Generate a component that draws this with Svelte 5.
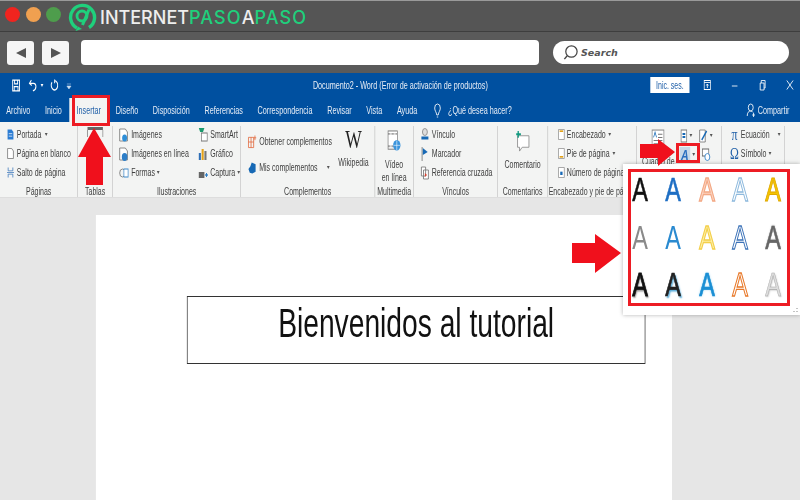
<script>
  const tabs = ['Archivo','Inicio','Insertar','Diseño','Disposición','Referencias','Correspondencia','Revisar','Vista','Ayuda'];
  const arts = ['a1','a2','a3','a4','a5','b1','b2','b3','b4','b5','c1','c2','c3','c4','c5'];
</script>

<div class="root">
  <header class="chrome-top">
    <i class="dot red"></i><i class="dot orange"></i><i class="dot green"></i>
    <svg class="logo" viewBox="0 0 30 30" width="30" height="30">
      <path d="M9 26A12 12 0 1 1 21 25.500" fill="none" stroke="#1fd07c" stroke-width="3.400"/>
      <path d="M10 24.500L7.500 29L14 27Z" fill="#1fd07c"/>
      <circle cx="14" cy="14" r="5" fill="none" stroke="#1fd07c" stroke-width="2.800"/>
      <path d="M21 7.500L14.500 23" fill="none" stroke="#1fd07c" stroke-width="3"/>
    </svg>
    <span class="brand">INTERNET<b>PASO</b>A<b>PASO</b></span>
  </header>
  <nav class="chrome-nav">
    <button class="navbtn"><svg viewBox="0 0 12 12" width="12" height="12"><path d="M11 1V11L1 6Z" fill="#555"/></svg></button>
    <button class="navbtn"><svg viewBox="0 0 12 12" width="12" height="12"><path d="M1 1V11L11 6Z" fill="#555"/></svg></button>
    <div class="address"></div>
    <div class="search">
      <svg viewBox="0 0 18 18" width="17" height="17"><circle cx="10" cy="8" r="6" fill="none" stroke="#444" stroke-width="1.3"/><path d="M5.500 12.500L2.500 16" stroke="#444" stroke-width="1.500"/></svg>
      <span>Search</span>
    </div>
  </nav>

  <div class="frame">
    <section class="titlebar">
      <div class="qat">
        <svg viewBox="0 0 12 12" width="14" height="13"><path d="M1.500 1H10.500V11H1.500Z M4 1V4.500H8V1 M3.500 11V7H8.500V11" fill="none" stroke="#fff" stroke-width="1.200"/></svg>
        <svg class="undo" viewBox="0 0 12 12" width="14" height="13"><path d="M4 1L1.500 4L4.500 6 M2 4H7Q10 4 10 7T6 11" fill="none" stroke="#fff" stroke-width="1.300"/></svg>
        <i class="caret w"></i>
        <svg class="redo" viewBox="0 0 12 12" width="14" height="13"><path d="M7 1.500A4.300 4.300 0 1 1 3.500 3M7 .5V4" fill="none" stroke="#fff" stroke-width="1.300"/></svg>
        <svg class="cust" viewBox="0 0 8 8" width="9" height="8"><path d="M1 2H7M1 4H7L4 7Z" fill="#cfe0f2" stroke="#cfe0f2" stroke-width=".6"/></svg>
      </div>
      <div class="doc">Documento2 - Word (Error de activación de productos)</div>
      <button class="signin">Inic. ses.</button>
      <div class="win">
        <svg viewBox="0 0 12 12" width="15" height="12"><rect x="1.500" y="1.500" width="9" height="9" fill="none" stroke="#fff"/><path d="M1.500 3.500H10.500M6 9V5M4.500 6.500L6 5L7.500 6.500" fill="none" stroke="#fff"/></svg>
        <svg viewBox="0 0 12 12" width="15" height="12"><path d="M2 7H10" stroke="#fff"/></svg>
        <svg viewBox="0 0 12 12" width="15" height="12"><path d="M2.500 4H8V11H2.500ZM4 4V1.500H9.500V9H8" fill="none" stroke="#fff"/></svg>
        <svg viewBox="0 0 12 12" width="15" height="12"><path d="M1.500 1.500L10.500 10.500M10.500 1.500L1.500 10.500" stroke="#fff"/></svg>
      </div>
    </section>
    <section class="tabs">
      {#each tabs as t}
        <span class="tab" class:active={t === 'Insertar'}>{t}</span>
      {/each}
      <svg class="bulb" viewBox="0 0 10 15" width="12" height="15"><path d="M5 1A4 4 0 0 1 9 5C9 8 6.500 9 6 12H4C3.500 9 1 8 1 5A4 4 0 0 1 5 1ZM4 14H6" fill="none" stroke="#fff"/></svg>
      <span class="ask">¿Qué desea hacer?</span>
      <span class="share">
        <svg viewBox="0 0 12 14" width="15" height="14"><circle cx="6" cy="4.500" r="3.500" fill="none" stroke="#fff"/><path d="M1 13Q1 8 6 8Q8 8 9.500 9.500M8 12H12M10 10V14" fill="none" stroke="#fff"/></svg>
        Compartir
      </span>
    </section>

    <section class="ribbon">
      <div class="group g1">
        <div class="col pg">
          <div class="it"><svg viewBox="0 0 12 14" width="10" height="13"><path d="M1 1H8L11 4V13H1Z" fill="#2b7cd3"/><path d="M3 6H9M3 9H9" stroke="#fff"/></svg>Portada<i class="caret"></i></div>
          <div class="it"><svg viewBox="0 0 12 14" width="10" height="13"><path d="M1 1H8L11 4V13H1Z" fill="#fff" stroke="#666"/></svg>Página en blanco</div>
          <div class="it"><svg viewBox="0 0 12 14" width="10" height="13"><path d="M2 1V5H10V1M2 13V9H10V13M0 7H12" fill="none" stroke="#2f6fb7"/></svg>Salto de página</div>
        </div>
        <div class="glabel">Páginas</div>
      </div>
      <div class="group g2">
        <div class="col center">
          <svg viewBox="0 0 24 10" width="24" height="10"><rect x="1" y="0" width="22" height="3" fill="#666"/><path d="M1 3V10M23 3V10" stroke="#888"/></svg>
        </div>
        <div class="glabel">Tablas</div>
      </div>
      <div class="group g3">
        <div class="cols2">
          <div class="col il1">
            <div class="it"><svg viewBox="0 0 14 14" width="16" height="14"><path d="M1 1H9L12 4V13H1Z" fill="#fff" stroke="#777"/><circle cx="8" cy="10" r="3.500" fill="#2f8fd8"/></svg>Imágenes</div>
            <div class="it"><svg viewBox="0 0 14 14" width="16" height="14"><path d="M1 1H9L12 4V13H1Z" fill="#fff" stroke="#777"/><circle cx="8" cy="10" r="4" fill="#2f7fc8"/></svg>Imágenes en línea</div>
            <div class="it"><svg viewBox="0 0 14 14" width="16" height="14"><circle cx="5" cy="7" r="4" fill="none" stroke="#777"/><rect x="7" y="3" width="6" height="8" fill="#fff" stroke="#3a87c9"/></svg>Formas<i class="caret"></i></div>
          </div>
          <div class="col il2">
            <div class="it"><svg viewBox="0 0 14 14" width="16" height="14"><path d="M1 0H9L7 4H3Z" fill="#1b9a6e"/><rect x="5" y="5" width="8" height="8" fill="#fff" stroke="#777"/></svg>SmartArt</div>
            <div class="it"><svg viewBox="0 0 14 14" width="16" height="14"><rect x="1" y="6" width="3" height="7" fill="#2f6fb7"/><rect x="5" y="2" width="3" height="11" fill="#e3a21a"/><rect x="9" y="4" width="3" height="9" fill="#777"/></svg>Gráfico</div>
            <div class="it"><svg viewBox="0 0 14 14" width="16" height="14"><rect x="1" y="6" width="8" height="6" fill="#666"/><path d="M10 9H14M12 7V11" stroke="#2f7fc8" stroke-width="1.500"/></svg>Captura<i class="caret"></i></div>
          </div>
        </div>
        <div class="glabel">Ilustraciones</div>
      </div>
      <div class="group g4">
        <div class="compl">
          <div class="col two">
            <div class="it"><svg viewBox="0 0 14 14" width="13" height="14"><path d="M1 2H9V13H1ZM1 7H9M5 2V13M11 0V5M9 2.500H13" fill="none" stroke="#e2673a"/></svg>Obtener complementos</div>
            <div class="it"><svg viewBox="0 0 14 14" width="13" height="14"><path d="M6 1L12 3V11L7 13L3 12L1 8L4 5Z" fill="#1769b5"/></svg>Mis complementos<i class="caret sp"></i></div>
          </div>
          <div class="wiki"><span class="w">W</span><span class="wn">Wikipedia</span></div>
        </div>
        <div class="glabel">Complementos</div>
      </div>
      <div class="group g5">
        <div class="col big">
          <svg viewBox="0 0 20 24" width="24" height="23"><rect x="1" y="1" width="14" height="19" fill="#fff" stroke="#777"/><path d="M1 4H15M1 17H15" stroke="#777" stroke-dasharray="1 1" stroke-width="2"/><circle cx="14" cy="16" r="5.500" fill="#3b94dc"/><path d="M9 16H19M14 11V21" stroke="#fff" stroke-width=".7"/></svg>
          <span>Vídeo<br>en línea</span>
        </div>
        <div class="glabel">Multimedia</div>
      </div>
      <div class="group g6">
        <div class="col vin">
          <div class="it"><svg viewBox="0 0 12 14" width="14" height="14"><circle cx="6" cy="4" r="3.500" fill="#ddd" stroke="#888"/><path d="M1 10H11" stroke="#1769b5" stroke-width="3"/></svg>Vínculo</div>
          <div class="it"><svg viewBox="0 0 12 14" width="14" height="14"><path d="M2 0V14" stroke="#777"/><path d="M3 1L10 5L3 8Z" fill="#1769b5"/></svg>Marcador</div>
          <div class="it"><svg viewBox="0 0 12 14" width="14" height="14"><path d="M1 1H7V10H1Z M4 4H11V13H4Z" fill="#fff" stroke="#777"/><path d="M6 7L9 9L6 11Z" fill="#d8432f"/></svg>Referencia cruzada</div>
        </div>
        <div class="glabel">Vínculos</div>
      </div>
      <div class="group g7">
        <div class="col big">
          <svg viewBox="0 0 22 24" width="24" height="23"><path d="M3 6H20V18H10L6 22V18H3Z" fill="#fff" stroke="#888"/><path d="M4 1V8M1 4.500H8" stroke="#119a80" stroke-width="2"/></svg>
          <span>Comentario</span>
        </div>
        <div class="glabel">Comentarios</div>
      </div>
      <div class="group g8">
        <div class="col enc">
          <div class="it"><svg viewBox="0 0 12 14" width="10" height="13"><path d="M1 1H11V13H1Z" fill="#fff" stroke="#888"/><path d="M3 3H9" stroke="#e3a21a" stroke-width="2"/></svg>Encabezado<i class="caret"></i></div>
          <div class="it"><svg viewBox="0 0 12 14" width="10" height="13"><path d="M1 1H11V13H1Z" fill="#fff" stroke="#888"/><path d="M3 11H9" stroke="#e3a21a" stroke-width="2"/></svg>Pie de página<i class="caret"></i></div>
          <div class="it"><svg viewBox="0 0 12 14" width="10" height="13"><path d="M1 1H11V13H1Z" fill="#fff" stroke="#888"/><rect x="4" y="6" width="4" height="4" fill="#1769b5"/></svg>Número de página</div>
        </div>
        <div class="glabel over">Encabezado y pie de página</div>
      </div>
      <div class="group g9">
        <div class="textgrp">
          <div class="col big boxbtn">
            <svg viewBox="0 0 18 20" width="24" height="21"><rect x="1" y="1" width="16" height="18" fill="#fff" stroke="#888"/><path d="M9 5H15M9 8H15M3 11H15M3 14H15" stroke="#777"/><path d="M3 8L5 3L7 8" fill="none" stroke="#1769b5"/></svg>
            <span>Cuadro de</span>
          </div>
          <div class="tools">
            <div class="trow">
              <svg viewBox="0 0 12 14" width="12" height="14"><rect x="2" y="1" width="8" height="12" fill="#fff" stroke="#777"/><path d="M4 5H8M4 8H8" stroke="#1769b5" stroke-width="2"/></svg>
              <i class="caret"></i>
              <svg class="t2" viewBox="0 0 12 14" width="15" height="14"><path d="M1 1H9V13H1Z" fill="#fff" stroke="#777"/><path d="M4 11L11 2" stroke="#1769b5" stroke-width="2"/></svg>
              <i class="caret"></i>
            </div>
            <div class="trow">
              <span class="wa">A</span><i class="caret"></i>
              <svg class="t2" viewBox="0 0 12 14" width="15" height="14"><rect x="1" y="1" width="9" height="7" fill="#fff" stroke="#666"/><circle cx="8" cy="9" r="3.500" fill="#fff" stroke="#2f7fc8"/></svg>
            </div>
          </div>
        </div>
        <div class="glabel"></div>
      </div>
      <div class="group g10">
        <div class="col sym">
          <div class="it"><span class="glyph">π</span>Ecuación<i class="caret sp"></i></div>
          <div class="it"><span class="glyph">Ω</span>Símbolo<i class="caret"></i></div>
        </div>
        <div class="glabel"></div>
      </div>
    </section>

    <main class="canvas">
      <div class="page">
        <div class="textbox">Bienvenidos al tutorial</div>
      </div>
    </main>
  </div>

  <div class="popup">
    <div class="artgrid">
      {#each arts as a}<span class="art {a}">A</span>{/each}
    </div>
    <svg class="grip" viewBox="0 0 6 6" width="6" height="6"><path d="M5 1V2M5 4V5M2 4V5" stroke="#888"/></svg>
  </div>

  <div class="mark tabmark"></div>
  <div class="mark wamark"></div>
  <svg class="arrows" viewBox="0 0 800 500" width="800" height="500">
    <path d="M94 128L111 157H103V185H86V157H78Z" fill="#f0101c"/>
    <path d="M640 144H658V139L675 152L658 166V158H640Z" fill="#f0101c"/>
    <path d="M572 243H595V234L621 253L595 273V263H572Z" fill="#f0101c"/>
  </svg>
</div>

<style>
  :global(body) { margin: 0; }
  .root {
    position: relative; width: 800px; height: 500px; overflow: hidden;
    font-family: "Liberation Sans", sans-serif;
    font-size: 10px; color: #404040; background: #e6e6e6;
  }
  .chrome-top {
    height: 32px; box-sizing: border-box; background: #555; border-top: 1px solid #9a9a9a;
    border-bottom: 1px solid #3e3e3e; display: flex; align-items: center; padding: 2px 0 0 5px;
  }
  .dot { width: 15px; height: 15px; border-radius: 50%; margin: 0 5.500px 5px 0; }
  .red { background: #f0241f; }
  .orange { background: #f0a050; }
  .green { background: #4e9d4c; }
  .logo { margin-left: 1.500px; margin-right: 2px; }
  .brand { font-family: "Inter", sans-serif; font-size: 18px; font-weight: 500; color: #eee; white-space: nowrap; }
  .brand b { color: #1fd07c; font-weight: 500; letter-spacing: 1.100px; }
  .chrome-nav {
    height: 41px; box-sizing: border-box; background: #5a5a5a; display: flex; align-items: center; padding: 0 11px 0 7px;
  }
  .navbtn {
    width: 27px; height: 24px; border: 0; padding: 0; background: #f6f6f6; border-radius: 3px; margin-right: 8px;
    display: flex; align-items: center; justify-content: center;
  }
  .address { width: 458px; height: 25px; margin-left: 4px; background: #fff; border-radius: 4px; }
  .search {
    margin-left: 14px; flex: 1; height: 23px; background: #fff; border-radius: 12px; display: flex; align-items: center;
    padding-left: 9px; color: #555; font: italic bold 9.500px "DejaVu Sans", sans-serif;
  }
  .search svg { margin-right: 2px; }

  /* The Word window in the reference is squeezed horizontally, icons and text alike */
  .frame { width: 1142.857px; transform: scaleX(.7); transform-origin: 0 0; }
  .titlebar { height: 25px; background: #0050a0; display: flex; align-items: center; color: #fff; }
  .qat { width: 447px; flex: none; display: flex; align-items: center; padding-left: 16px; box-sizing: border-box; }
  .undo { margin-left: 10px; }
  .redo { margin-left: 8px; }
  .cust { margin-left: 10px; }
  .doc { width: 482px; flex: none; font-size: 10.300px; color: #e8eef6; white-space: nowrap; }
  .signin { width: 56px; height: 16px; flex: none; margin-top: -1px; border: 0; padding: 0; background: #fff; color: #1f5fa8; font: 10px "Liberation Sans", sans-serif; white-space: nowrap; }
  .win { flex: 1; display: flex; justify-content: space-between; padding: 0 7px 2px 18px; }
  .tabs { height: 24px; background: #0050a0; display: flex; align-items: center; color: #e6edf6; padding-left: 9px; font-size: 10.300px; }
  .tab { margin-right: 21px; white-space: nowrap; }
  .tab.active { color: #1f5fa8; background: #f3f4f3; padding: 7px 10px; margin: 0 11px -1px -10px; }
  .bulb { margin-left: 2px; margin-right: 9px; }
  .ask { white-space: nowrap; }
  .share { margin-left: auto; margin-right: 15px; display: flex; align-items: center; gap: 3px; }
  .ribbon { height: 76px; background: #f3f4f3; display: flex; border-bottom: 1px solid #ddd; box-sizing: border-box; }
  .group { box-sizing: border-box; border-right: 1px solid #c4c4c4; display: flex; flex-direction: column; margin-top: 4px; flex: none; }
  .g1 { width: 111.400px; } .g2 { width: 50px; } .g3 { width: 182.900px; } .g4 { width: 191.400px; } .g5 { width: 55.700px; }
  .g6 { width: 120px; } .g7 { width: 71.400px; } .g8 { width: 127.100px; } .g9 { width: 121.400px; } .g10 { width: 90px; }
  .col { flex: 1; display: flex; flex-direction: column; gap: 4px; padding-top: 1px; min-width: 0; }
  .pg { padding-left: 10px; }
  .pg .it { gap: 4px; }
  .col.center { align-items: center; padding-top: 1px; }
  .col.big { align-items: center; text-align: center; padding-top: 4px; line-height: 13px; gap: 5px; white-space: nowrap; }
  .col.two { padding: 8px 0 0 10px; gap: 11px; flex: none; width: 131px; box-sizing: border-box; }
  .cols2 { flex: 1; display: flex; }
  .il1 { width: 113px; flex: none; padding-left: 8px; }
  .il2 { flex: 1; }
  .il1 .it, .il2 .it { gap: 2px; }
  .vin { padding-left: 8.500px; }
  .enc { padding-left: 14px; }
  .compl { flex: 1; display: flex; }
  .it { display: flex; align-items: center; gap: 3px; white-space: nowrap; height: 15px; }
  .it svg { flex: none; }
  .caret { display: inline-block; width: 0; height: 0; border: 2.500px solid transparent; border-top: 3px solid #555; border-bottom: 0; margin-left: 1px; flex: none; }
  .caret.w { border-top-color: #fff; margin-left: 4px; }
  .caret.sp { margin-left: 10px; }
  .glabel { height: 10px; text-align: center; line-height: 10px; white-space: nowrap; flex: none; }
  .glabel.over { margin-left: 1px; }
  .wiki { flex: 1; display: flex; flex-direction: column; align-items: center; }
  .wiki .w { font: 25px/28px "Liberation Serif", serif; color: #222; }
  .wn { margin-top: 3px; }
  .textgrp { flex: 1; display: flex; }
  .boxbtn { width: 61px; flex: none !important; padding-top: 3px !important; }
  .trow { display: flex; align-items: center; height: 19px; gap: 1px; }
  .t2 { margin-left: 7px; }
  .wa { width: 15px; margin-right: 1px; background: #c8d8e8; font: italic bold 15px/15px "Liberation Sans", sans-serif; color: #2a6ec0; text-align: center; }
  .glyph { font: 17px/15px "Liberation Serif", serif; color: #1f5fa8; width: 14px; text-align: center; }
  .sym { padding-left: 11px; }
  .sym .it { gap: 2px; }
  .canvas { height: 302px; background: #e6e6e6; padding: 17px 0 0 137px; box-sizing: border-box; }
  .page { width: 823px; height: 285px; background: #fff; box-sizing: border-box; padding: 81px 0 0 130px; }
  .textbox {
    width: 655px; height: 68px; box-sizing: border-box; border: 1px solid #333; text-align: center;
    font-size: 40.300px; line-height: 54px; color: #111; white-space: nowrap;
  }
  .popup {
    position: absolute; left: 623px; top: 164px; width: 177px; height: 151px; background: #fff;
    box-shadow: 0 0 4px rgba(0,0,0,.3); box-sizing: border-box;
  }
  .artgrid {
    position: absolute; left: 5px; top: 5px; width: 162px; height: 137px; box-sizing: border-box; border: 3px solid #ed1c24;
    padding-right: 5px; display: grid; grid-template-columns: repeat(5, 18px); grid-auto-rows: 47.500px;
    justify-content: space-between; align-content: center;
  }
  .art { font-size: 33.500px; line-height: 47.500px; display: flex; justify-content: center; transform: scaleX(.7); }
  .a1 { color: #111; -webkit-text-stroke: .6px #111; }
  .a2 { color: #1f6fc4; -webkit-text-stroke: .6px #1f6fc4; }
  .a3 { color: #fcd5c2; -webkit-text-stroke: 1.500px #f3a884; }
  .a4 { color: #fff; -webkit-text-stroke: 1.300px #8db9dd; }
  .a5 { color: #f5c400; -webkit-text-stroke: 1px #dfa800; }
  .b1 { color: #8a8a8a; }
  .b2 { color: #2a8ad0; -webkit-box-reflect: below -13px linear-gradient(transparent 78%, rgba(255,255,255,.5)); }
  .b3 { color: #fff0a8; -webkit-text-stroke: 1.500px #f3cf4a; }
  .b4 { color: #fff; -webkit-text-stroke: 1.300px #3d73b8; }
  .b5 { color: #666; -webkit-text-stroke: .6px #666; text-shadow: 0 -1px 2px #ccc; }
  .c1 { color: #111; -webkit-text-stroke: .9px #111; text-shadow: 1px 2px 2px #999; }
  .c2 { color: #222; -webkit-text-stroke: .7px #222; text-shadow: 2px 2px 2px #4fa8d8; }
  .c3 { color: #1b8fd4; -webkit-text-stroke: .7px #1b8fd4; text-shadow: 0 0 3px #8fd0f0; }
  .c4 { color: #fff; -webkit-text-stroke: 1.400px #e8792a; }
  .c5 { color: #ddd; -webkit-text-stroke: .6px #aaa; text-shadow: 1px 1px 2px #ccc; }
  .grip { position: absolute; right: 2px; bottom: 2px; }
  .mark { position: absolute; box-sizing: border-box; border: 3px solid #ed1c24; }
  .tabmark { left: 72px; top: 95px; width: 38px; height: 31px; }
  .wamark { left: 676px; top: 143px; width: 24px; height: 20px; }
  .arrows { position: absolute; left: 0; top: 0; pointer-events: none; }
</style>
